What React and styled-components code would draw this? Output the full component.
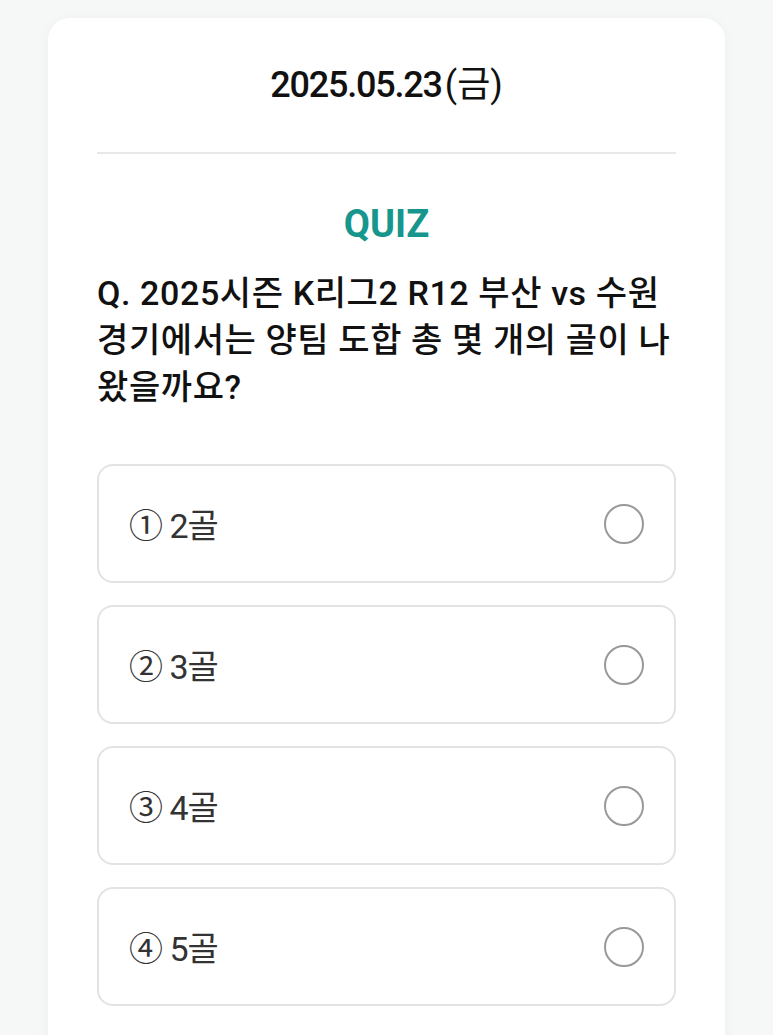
import React from "react"
import styled, { createGlobalStyle } from "styled-components"

const GlobalStyle = createGlobalStyle`
  html, body {
    margin: 0;
    padding: 0;
    background: #f6f8f7;
  }
  body {
    font-family: Roboto, "Noto Sans CJK KR", sans-serif;
    color: #111;
  }
`

const options = ["① 2골", "② 3골", "③ 4골", "④ 5골"]

const App = () => {
  return (
    <Page>
      <GlobalStyle />
      <Card>
        <DateLine>
          2025.05.23<Weekday>(금)</Weekday>
        </DateLine>
        <Divider />
        <Title>QUIZ</Title>
        <Question>
          Q. 2025시즌 K리그2 R12 부산 vs 수원 경기에서는 양팀 도합 총 몇 개의 골이 나
          왔을까요?
        </Question>
        <OptionList>
          {options.map((label) => (
            <Option key={label}>
              <span>{label}</span>
              <Radio />
            </Option>
          ))}
        </OptionList>
      </Card>
    </Page>
  )
}

export default App

const Page = styled.div`
  padding: 18px 48px 0;
  height: 1035px;
  box-sizing: border-box;
  overflow: hidden;
`

const Card = styled.div`
  background: #fff;
  border-radius: 22px;
  box-shadow: 0 2px 14px rgba(0, 0, 0, 0.04);
  padding: 47px 49px 120px;
`

const DateLine = styled.div`
  text-align: center;
  font-size: 36px;
  font-weight: 500;
  letter-spacing: -1.2px;
  line-height: 40px;
  color: #111;
`

const Weekday = styled.span`
  font-weight: 400;
  letter-spacing: 0;
  margin-left: 3px;
`

const Divider = styled.hr`
  border: 0;
  height: 2px;
  background: #e8e8e8;
  margin: 47px 0 0;
`

const Title = styled.div`
  text-align: center;
  color: #16968c;
  font-size: 38px;
  font-weight: 700;
  line-height: 44px;
  margin-top: 48px;
`

const Question = styled.div`
  font-size: 34px;
  font-weight: 500;
  line-height: 47px;
  letter-spacing: 0.6px;
  word-break: keep-all;
  color: #111;
  margin-top: 24px;
`

const OptionList = styled.div`
  display: flex;
  flex-direction: column;
  gap: 22px;
  margin-top: 53px;
`

const Option = styled.div`
  height: 119px;
  box-sizing: border-box;
  border: 2px solid #e3e3e3;
  border-radius: 16px;
  display: flex;
  align-items: center;
  justify-content: space-between;
  padding: 0 30px 0 30px;
  font-size: 34px;
  color: #333;
  letter-spacing: -1px;
`

const Radio = styled.span`
  width: 36px;
  height: 36px;
  border: 2px solid #999;
  border-radius: 50%;
`
